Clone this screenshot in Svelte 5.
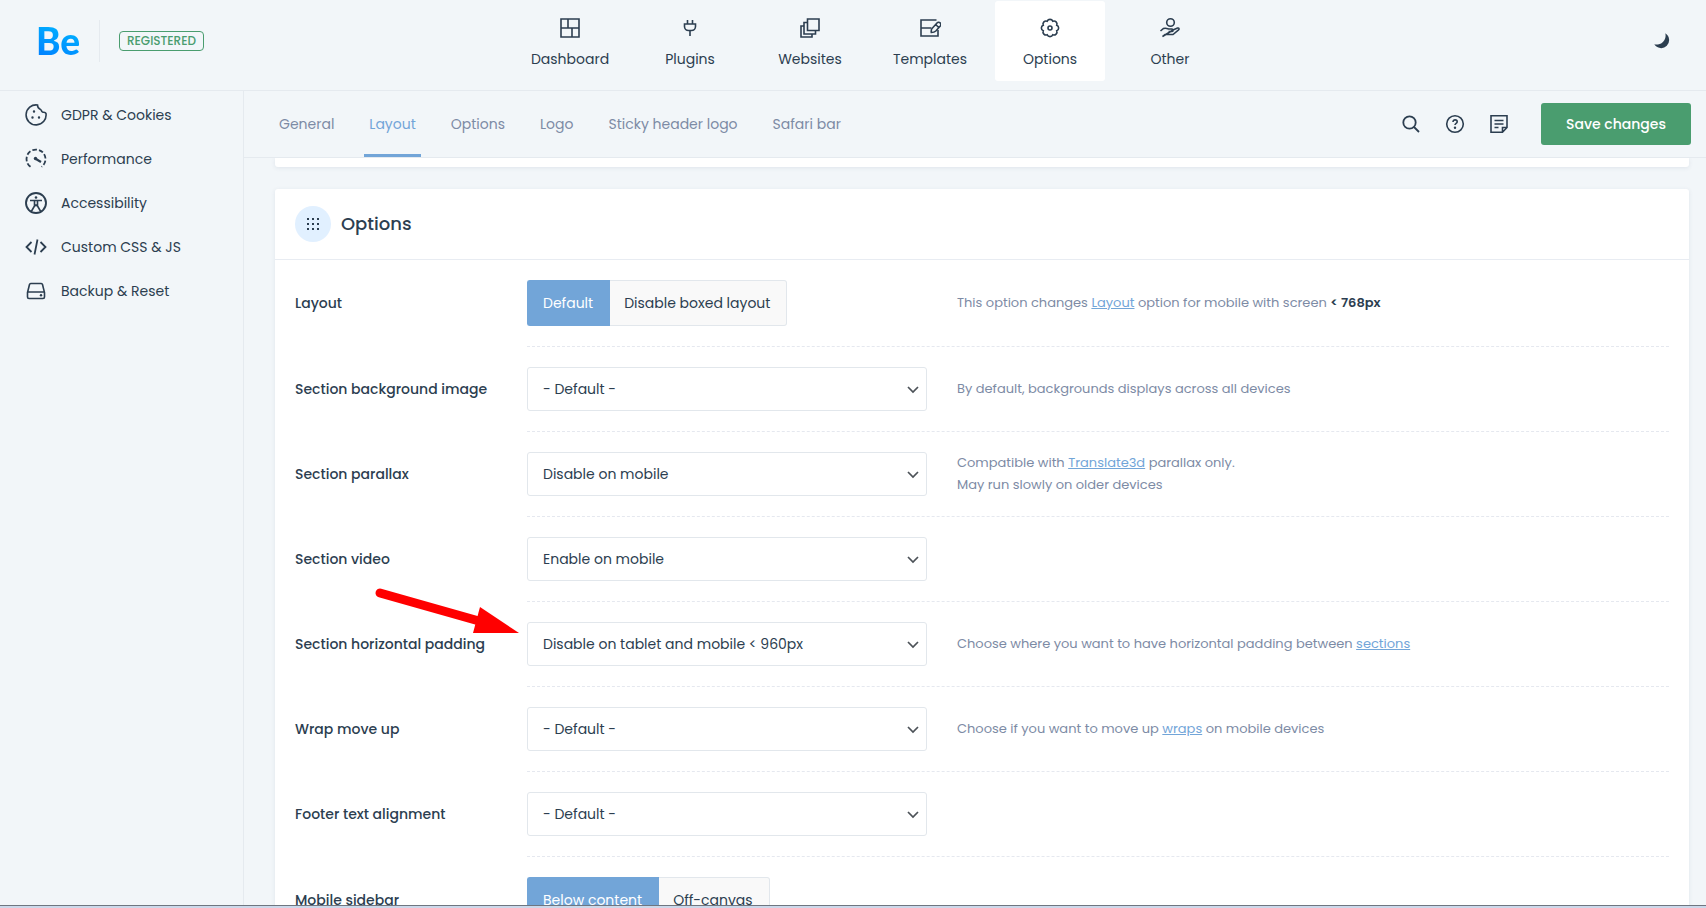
<script lang="ts">
	type Part = { text: string; link?: boolean; strong?: boolean };
	type Option = {
		id: string;
		label: string;
		kind: 'segment' | 'select';
		choices: string[];
		value: string;
		desc?: Part[][];
		pointer?: boolean;
	};

	const nav = ['Dashboard', 'Plugins', 'Websites', 'Templates', 'Options', 'Other'];
	const sidebar = ['GDPR & Cookies', 'Performance', 'Accessibility', 'Custom CSS & JS', 'Backup & Reset'];
	const tabs = ['General', 'Layout', 'Options', 'Logo', 'Sticky header logo', 'Safari bar'];

	let activeNav = $state('Options');
	let activeTab = $state('Layout');

	let options: Option[] = $state([
		{
			id: 'layout',
			label: 'Layout',
			kind: 'segment',
			choices: ['Default', 'Disable boxed layout'],
			value: 'Default',
			desc: [
				[
					{ text: 'This option changes ' },
					{ text: 'Layout', link: true },
					{ text: ' option for mobile with screen ' },
					{ text: '< 768px', strong: true }
				]
			]
		},
		{
			id: 'bg-image',
			label: 'Section background image',
			kind: 'select',
			choices: ['- Default -', 'Disable on mobile'],
			value: '- Default -',
			desc: [[{ text: 'By default, backgrounds displays across all devices' }]]
		},
		{
			id: 'parallax',
			label: 'Section parallax',
			kind: 'select',
			choices: ['Disable on mobile', 'Enable on mobile'],
			value: 'Disable on mobile',
			desc: [
				[{ text: 'Compatible with ' }, { text: 'Translate3d', link: true }, { text: ' parallax only.' }],
				[{ text: 'May run slowly on older devices' }]
			]
		},
		{
			id: 'video',
			label: 'Section video',
			kind: 'select',
			choices: ['Disable on mobile', 'Enable on mobile'],
			value: 'Enable on mobile'
		},
		{
			id: 'padding',
			label: 'Section horizontal padding',
			kind: 'select',
			choices: ['- Default -', 'Disable on tablet and mobile < 960px'],
			value: 'Disable on tablet and mobile < 960px',
			pointer: true,
			desc: [
				[
					{ text: 'Choose where you want to have horizontal padding between ' },
					{ text: 'sections', link: true }
				]
			]
		},
		{
			id: 'wrap',
			label: 'Wrap move up',
			kind: 'select',
			choices: ['- Default -', 'Disable on mobile'],
			value: '- Default -',
			desc: [
				[
					{ text: 'Choose if you want to move up ' },
					{ text: 'wraps', link: true },
					{ text: ' on mobile devices' }
				]
			]
		},
		{
			id: 'footer-align',
			label: 'Footer text alignment',
			kind: 'select',
			choices: ['- Default -', 'Center on mobile'],
			value: '- Default -'
		},
		{
			id: 'sidebar',
			label: 'Mobile sidebar',
			kind: 'segment',
			choices: ['Below content', 'Off-canvas'],
			value: 'Below content'
		}
	]);
</script>

{#snippet icon(name: string)}
	<svg class="icon" viewBox="0 0 22 22" aria-hidden="true">
		{#if name === 'Dashboard'}
			<path d="M2 2h18v18H2zM2 11h18M9 2v9M13 11v9" />
		{:else if name === 'Plugins'}
			<path d="M8.500 3v4M13.500 3v4M5.500 7h11v2.500a4 4 0 0 1-4 4h-3a4 4 0 0 1-4-4zM11 13.500V19" />
		{:else if name === 'Websites'}
			<path d="M8.500 2H20v11.500H8.500zM8.500 5.500H5V17h11.500v-3.500M5 9H2v11h11v-3" />
		{:else if name === 'Templates'}
			<path d="M17.500 3H2v16h17v-6M2 11h10.500" />
			<path d="M12.300 15.500c-.3-2 0-3.500 1.200-4.500l4.500-5a2.200 2.200 0 0 1 3.300 3l-4.500 5c-1.200 1.200-2.500 1.500-4.500 1.500zM16.700 7.500l3 3" />
		{:else if name === 'Options'}
			<path
				d="M17.740 8.210A3 3 0 0 1 17.740 13.790A3 3 0 0 1 13.790 17.740A3 3 0 0 1 8.210 17.740A3 3 0 0 1 4.260 13.790A3 3 0 0 1 4.260 8.210A3 3 0 0 1 8.210 4.260A3 3 0 0 1 13.790 4.260A3 3 0 0 1 17.740 8.210z"
			/>
			<circle cx="11" cy="11" r="2" />
		{:else if name === 'Other'}
			<circle cx="11.500" cy="5.500" r="3.800" />
			<path
				d="M1.500 14l3-2.500c2-.8 4 0 5.500.5h3c1.500.3 1.500 2.300 0 2.500H9.500M14 13l4.500-2c1.800-.3 2 1.300.8 2.200L14 17.500H6l-2.500 2z"
			/>
		{:else if name === 'GDPR & Cookies'}
			<path d="M12.500 1a10 10 0 1 0 8.500 8.500c-.8-1.500-2-1-3.500-1.500-1.500-.600-.8-2-2-2.600-1.700-.6-3-1.400-3-4.400z" />
			<path class="dots" d="M9 7.500h.01M7.500 13.500h.01M14 13.500h.01" />
		{:else if name === 'Performance'}
			<path d="M5.500 18.800a9.500 9.500 0 1 1 11 0" stroke-width="1.800" stroke-dasharray="4.600 2.100" />
			<path d="M10.500 10.800l5.500 3.200" stroke-width="2.200" />
			<circle class="solid" cx="10.500" cy="10.500" r="1.700" />
		{:else if name === 'Accessibility'}
			<circle cx="11" cy="11" r="10" stroke-width="1.900" />
			<circle class="solid" cx="11" cy="5.500" r="1.300" />
			<path d="M5 8.500h12M9.500 9v5L6 20M12.500 9v5l3.500 6M9.500 14l1.500-1 1.500 1" />
		{:else if name === 'Custom CSS & JS'}
			<path d="M6.500 6L1.500 11l5 5M15.500 6l5 5-5 5M12.500 3.500l-3 15" stroke-width="1.800" />
		{:else if name === 'Backup & Reset'}
			<path d="M2.500 12.500l2-8c.2-.7.5-1 1.200-1h10.600c.7 0 1 .3 1.200 1l2 8v4.500a1.500 1.500 0 0 1-1.500 1.500H4A1.500 1.500 0 0 1 2.500 17zM2.500 12h17" />
			<path class="dots" d="M16 15.300h.01" />
		{:else if name === 'search'}
			<circle cx="9.500" cy="9.500" r="6.200" stroke-width="1.800" />
			<path d="M14 14l5 5" stroke-width="1.800" />
		{:else if name === 'help'}
			<circle cx="11" cy="11" r="8.300" />
			<path d="M9 9c0-3 4.200-2.600 4.200-.3 0 1.600-2.200 1.600-2.200 3.300" />
			<path class="dots" d="M11 14.800h.01" />
		{:else if name === 'notes'}
			<path d="M3 2.800h16v11.700L14.500 19.200H3zM14.500 19v-4.500H19M6.500 7.500h9M6.500 11h9M6.500 14.500h4" />
		{/if}
	</svg>
{/snippet}

<div class="page">
	<header class="topbar">
		<div class="brand">
			<span class="logo">Be</span>
			<span class="status"><span class="badge">REGISTERED</span></span>
		</div>
		<nav class="main-nav" aria-label="Main">
			{#each nav as item}
				<a href="#{item}" class:active={activeNav === item} onclick={() => (activeNav = item)}>
					{@render icon(item)}
					<span>{item}</span>
				</a>
			{/each}
		</nav>
		<div class="mode">
			<button type="button" aria-label="Dark mode">
				<svg viewBox="0 0 16 16" width="16" height="16" aria-hidden="true">
					<path class="solid" d="M11.300.3A8 8 0 1 1 .3 11.300A9 9 0 0 0 11.300.3z" />
				</svg>
			</button>
		</div>
	</header>

	<div class="body">
		<aside class="sidebar">
			{#each sidebar as item}
				<a href="#{item}">
					{@render icon(item)}
					<span>{item}</span>
				</a>
			{/each}
		</aside>

		<main>
			<div class="subnav">
				<nav class="tabs" aria-label="Sections">
					{#each tabs as tab}
						<a href="#{tab}" class:active={activeTab === tab} onclick={() => (activeTab = tab)}>{tab}</a>
					{/each}
				</nav>
				<div class="tools">
					<button type="button" class="tool" aria-label="Search">{@render icon('search')}</button>
					<button type="button" class="tool" aria-label="Help">{@render icon('help')}</button>
					<button type="button" class="tool" aria-label="Notes">{@render icon('notes')}</button>
					<button type="button" class="save">Save changes</button>
				</div>
			</div>

			<div class="content">
				<div class="card card-end"></div>
				<section class="card">
					<div class="card-header">
						<span class="card-icon">
							<svg viewBox="0 0 12 12" width="12" height="12" aria-hidden="true">
								<path class="solid" d="M0 0h2v2H0zM5 0h2v2H5zM10 0h2v2h-2zM0 5h2v2H0zM5 5h2v2H5zM10 5h2v2h-2zM0 10h2v2H0zM5 10h2v2H5zM10 10h2v2h-2z" />
							</svg>
						</span>
						<h2>Options</h2>
					</div>

					{#each options as option}
						<div class="row">
							{#if option.kind === 'select'}
								<label class="name" for={option.id}>{option.label}</label>
							{:else}
								<span class="name" id="{option.id}-label">{option.label}</span>
							{/if}
							<div class="field">
								{#if option.kind === 'select'}
									<div class="control select">
										<select id={option.id} bind:value={option.value}>
											{#each option.choices as choice}
												<option>{choice}</option>
											{/each}
										</select>
										<svg viewBox="0 0 12 8" width="12" height="8" aria-hidden="true">
											<path d="M1 1l5 5 5-5" />
										</svg>
										{#if option.pointer}
											<svg class="pointer" viewBox="0 0 146 48" width="146" height="48" aria-hidden="true">
												<path class="shaft" d="M6 7l106 30" />
												<path class="head" d="M106 21l39 26H99z" />
											</svg>
										{/if}
									</div>
								{:else}
									<div class="control">
										<div class="segment" role="group" aria-labelledby="{option.id}-label">
											{#each option.choices as choice}
												<button
													type="button"
													class:active={option.value === choice}
													onclick={() => (option.value = choice)}>{choice}</button
												>
											{/each}
										</div>
									</div>
								{/if}
								<div class="desc">
									{#each option.desc ?? [] as line}
										<p>
											{#each line as part}{#if part.link}<a href="#{part.text}">{part.text}</a
													>{:else if part.strong}<strong>{part.text}</strong
													>{:else}{part.text}{/if}{/each}
										</p>
									{/each}
								</div>
							</div>
						</div>
					{/each}
				</section>
			</div>
		</main>
	</div>
	<div class="edge"></div>
</div>

<style>
	:global(body) {
		background: #f2f6f9;
	}

	.page {
		display: flex;
		flex-direction: column;
		height: 100vh;
		overflow: hidden;
		background: #f2f6f9;
		color: #2c3e50;
		font-family: Poppins, Inter, 'Open Sans', sans-serif;
		font-size: 14px;
		line-height: 22px;
	}

	.page * {
		box-sizing: border-box;
	}

	a {
		color: inherit;
		text-decoration: none;
	}

	button,
	select {
		font: inherit;
		color: inherit;
		cursor: pointer;
	}

	svg {
		display: block;
		fill: none;
		stroke: currentColor;
		stroke-width: 1.6;
	}

	.icon {
		flex: none;
		width: 22px;
		height: 22px;
	}

	.dots {
		stroke-width: 2.4;
		stroke-linecap: round;
	}

	.solid {
		fill: currentColor;
		stroke: none;
	}

	.topbar {
		display: flex;
		flex: none;
		height: 91px;
		border-bottom: 1px solid #e5eaef;
	}

	.brand {
		display: flex;
		align-items: center;
		flex: none;
		width: 244px;
		height: 82px;
		padding-left: 36px;
	}

	.logo {
		width: 63px;
		background: linear-gradient(20deg, #0080ff 10%, #00b0ff 70%);
		background-clip: text;
		color: transparent;
		font-family: Lato, sans-serif;
		font-size: 37px;
		font-weight: 900;
		line-height: 42px;
	}

	.status {
		display: flex;
		align-items: center;
		height: 42px;
		padding-left: 19px;
		border-left: 1px solid #e5eaef;
	}

	.badge {
		padding: 0 7px;
		border: 1px solid #4a9d6f;
		border-radius: 4px;
		color: #4a9d6f;
		font-size: 12px;
		font-weight: 500;
		line-height: 18px;
	}

	.main-nav {
		display: flex;
		flex: 1;
		justify-content: center;
		gap: 10px;
		padding-top: 1px;
	}

	.main-nav a {
		display: flex;
		flex-direction: column;
		align-items: center;
		gap: 9px;
		width: 110px;
		height: 80px;
		padding-top: 16px;
		border-radius: 3px;
	}

	.main-nav a.active {
		background: #fff;
	}

	.mode {
		display: flex;
		justify-content: flex-end;
		align-items: center;
		width: 210px;
		height: 82px;
		padding-right: 36px;
	}

	.mode button {
		padding: 0;
		border: 0;
		background: none;
	}

	.body {
		display: flex;
		flex: 1;
		min-height: 0;
	}

	.sidebar {
		flex: none;
		width: 244px;
		padding-top: 2px;
		border-right: 1px solid #e5eaef;
	}

	.sidebar a {
		display: flex;
		align-items: center;
		gap: 14px;
		height: 44px;
		padding-left: 25px;
	}

	main {
		display: flex;
		flex: 1;
		flex-direction: column;
		min-width: 0;
	}

	.subnav {
		display: flex;
		flex: none;
		justify-content: space-between;
		height: 67px;
		padding: 0 15px 0 30px;
		border-bottom: 1px solid #e5eaef;
	}

	.tabs {
		display: flex;
		gap: 25px;
	}

	.tabs a {
		padding: 22px 5px 19px;
		border-bottom: 3px solid transparent;
		color: #7d8ba5;
	}

	.tabs a.active {
		border-color: #72a5d8;
		color: #72a5d8;
	}

	.tools {
		display: flex;
		align-items: center;
		gap: 22px;
	}

	.tool {
		padding: 0;
		border: 0;
		background: none;
	}

	.save {
		width: 150px;
		height: 42px;
		margin-left: 9px;
		border: 0;
		border-radius: 3px;
		background: #4a9d6f;
		color: #fff;
		font-weight: 500;
	}

	.content {
		display: flex;
		flex: 1;
		flex-direction: column;
		gap: 22px;
		min-height: 0;
		padding: 0 17px 0 31px;
		overflow: hidden;
	}

	.card {
		flex: none;
		border-radius: 3px;
		background: #fff;
		box-shadow: 0 1px 4px rgba(60, 80, 120, 0.1);
	}

	.card-end {
		height: 9px;
		border-radius: 0 0 3px 3px;
	}

	.card-header {
		display: flex;
		align-items: center;
		gap: 10px;
		height: 71px;
		padding: 0 20px;
		border-bottom: 1px solid #e8ecf2;
	}

	.card-icon {
		display: grid;
		place-items: center;
		width: 36px;
		height: 36px;
		border-radius: 50%;
		background: #e1f0ff;
	}

	h2 {
		margin: 0;
		font-size: 18px;
		font-weight: 500;
	}

	.row {
		display: flex;
		padding: 0 20px;
	}

	.name {
		align-self: center;
		flex: none;
		width: 232px;
		padding-bottom: 2px;
		font-weight: 500;
	}

	.field {
		display: flex;
		flex: 1;
		align-items: center;
		gap: 30px;
		padding: 20px 0;
		border-bottom: 1px dashed #e5e8ef;
	}

	.control {
		flex: none;
		width: 400px;
	}

	.select {
		position: relative;
	}

	.select select {
		display: block;
		width: 100%;
		height: 44px;
		padding: 0 40px 0 15px;
		appearance: none;
		border: 1px solid #e2e7ec;
		border-radius: 3px;
		background: #fff;
	}

	.select svg {
		position: absolute;
		top: 19px;
		right: 8px;
		color: #4c5258;
		stroke-width: 1.7;
		pointer-events: none;
	}

	.select .pointer {
		top: -36px;
		right: 100%;
		margin-right: 7px;
	}

	.shaft {
		stroke: #f00;
		stroke-width: 9;
		stroke-linecap: round;
	}

	.head {
		fill: #f00;
		stroke: none;
	}

	.segment {
		display: inline-flex;
		vertical-align: top;
		height: 46px;
	}

	.segment button {
		padding: 0 16px 0 14px;
		border: 1px solid #e2e7ec;
		border-left: 0;
		border-radius: 0 3px 3px 0;
		background: #f9f9f9;
	}

	.segment button:first-child {
		padding: 0 17px 0 15px;
		border-right: 0;
		border-left: 1px solid #e2e7ec;
		border-radius: 3px 0 0 3px;
	}

	.segment button.active,
	.segment button.active:first-child {
		border-color: #72a5d8;
		background: #72a5d8;
		color: #fff;
	}

	.desc {
		color: #7d8ba5;
		font-size: 13px;
	}

	.desc p {
		margin: 0;
	}

	.desc a {
		color: #72a5d8;
		text-decoration: underline;
	}

	.desc strong {
		color: #2c3e50;
		font-weight: 600;
	}

	.edge {
		flex: none;
		height: 3px;
		border-top: 1px solid #6f7680;
		background: #ccd8ea;
	}
</style>
